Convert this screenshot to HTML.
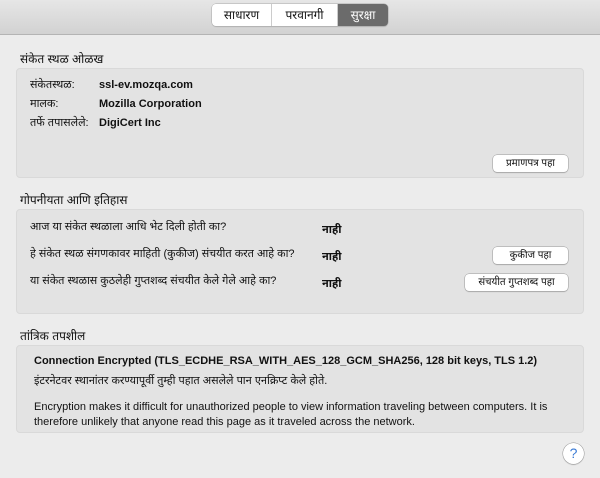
<!DOCTYPE html>
<html><head><meta charset="utf-8"><style>
*{margin:0;padding:0;box-sizing:border-box}
body{width:600px;height:478px;background:#ececec;font-family:"Liberation Sans","Noto Sans Devanagari","Lohit Devanagari",sans-serif;font-size:11px;color:#111;position:relative;overflow:hidden}
.tb{position:absolute;left:0;top:0;width:600px;height:35px;background:linear-gradient(#e6e6e6,#d2d2d2);border-bottom:1px solid #b4b4b4}
.tabs{position:absolute;left:212px;top:4px;height:22px;display:flex;border-radius:4px;overflow:hidden;box-shadow:0 0 0 0.5px #aaa,0 1px 1px rgba(0,0,0,.15)}
.tabs div{background:#fff;height:22px;line-height:22px;font-size:12px;text-align:center;border-right:1px solid #ccc}
.tabs div.sel{background:#6b6b6b;color:#fff;border:none}
.h{position:absolute;left:20px;font-size:12px}
.box{position:absolute;left:16px;width:568px;background:#e3e3e3;border:1px solid #d9d9d9;border-radius:4px}
.t{position:absolute;white-space:nowrap}
.b{font-weight:bold}
.btn{position:absolute;height:17px;background:#fff;border-radius:4px;box-shadow:0 0 0 .5px #999,0 1px 1px rgba(0,0,0,.2);font-size:10px;text-align:center;line-height:17px}
</style></head><body>
<div class="tb"></div>
<div class="tabs"><div style="width:60px">साधारण</div><div style="width:66px">परवानगी</div><div class="sel" style="width:50px">सुरक्षा</div></div>

<div class="h" style="top:52px">संकेत स्थळ ओळख</div>
<div class="box" style="top:68px;height:110px">
<div class="t" style="left:13px;top:10px">संकेतस्थळ:</div><div class="t b" style="left:82px;top:10px">ssl-ev.mozqa.com</div>
<div class="t" style="left:13px;top:29px">मालक:</div><div class="t b" style="left:82px;top:29px">Mozilla Corporation</div>
<div class="t" style="left:13px;top:48px">तर्फे तपासलेले:</div><div class="t b" style="left:82px;top:48px">DigiCert Inc</div>
<div class="btn" style="left:476px;top:86px;width:75px">प्रमाणपत्र पहा</div>
</div>

<div class="h" style="top:193px">गोपनीयता आणि इतिहास</div>
<div class="box" style="top:209px;height:105px">
<div class="t" style="left:13px;top:11px">आज या संकेत स्थळाला आधि भेट दिली होती का?</div><div class="t b" style="left:305px;top:14px">नाही</div>
<div class="t" style="left:13px;top:38px">हे संकेत स्थळ संगणकावर माहिती (कुकीज) संचयीत करत आहे का?</div><div class="t b" style="left:305px;top:41px">नाही</div>
<div class="btn" style="left:476px;top:37px;width:75px">कुकीज पहा</div>
<div class="t" style="left:13px;top:65px">या संकेत स्थळास कुठलेही गुप्तशब्द संचयीत केले गेले आहे का?</div><div class="t b" style="left:305px;top:68px">नाही</div>
<div class="btn" style="left:448px;top:64px;width:103px">संचयीत गुप्तशब्द पहा</div>
</div>

<div class="h" style="top:329px">तांत्रिक तपशील</div>
<div class="box" style="top:345px;height:88px">
<div class="t b" style="left:17px;top:9px">Connection Encrypted (TLS_ECDHE_RSA_WITH_AES_128_GCM_SHA256, 128 bit keys, TLS 1.2)</div>
<div class="t" style="left:17px;top:29px">इंटरनेटवर स्थानांतर करण्यापूर्वी तुम्ही पहात असलेले पान एनक्रिप्ट केले होते.</div>
<div class="t" style="left:17px;top:54px;line-height:15px;white-space:normal;width:545px">Encryption makes it difficult for unauthorized people to view information traveling between computers. It is therefore unlikely that anyone read this page as it traveled across the network.</div>
</div>

<div style="position:absolute;left:563px;top:443px;width:21px;height:21px;border-radius:50%;background:#fff;box-shadow:0 0 0 .5px #999,0 1px 1px rgba(0,0,0,.2);text-align:center;line-height:21px;font-size:14px;color:#3a7bd5">?</div>
</body></html>
